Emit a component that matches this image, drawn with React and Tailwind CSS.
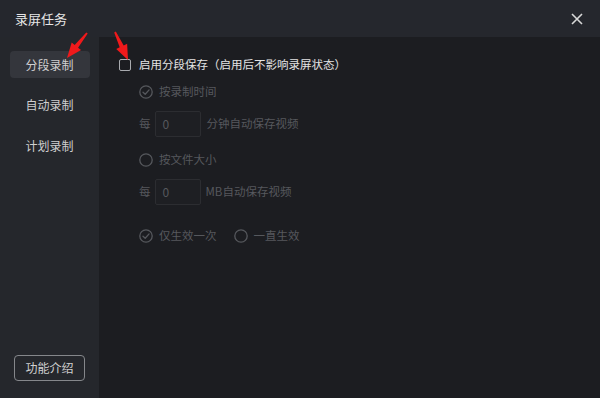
import React from "react";

const font = { fontFamily: '"Noto Sans CJK SC", "Noto Sans", sans-serif' };

function Radio({ checked }) {
  return (
    <svg width="14" height="14" viewBox="0 0 14 14" className="shrink-0">
      <circle cx="7" cy="7" r="6.2" fill="none" stroke="#56585d" strokeWidth="1.3" />
      {checked && (
        <path d="M4 7.2 L6.2 9.3 L10.1 4.9" fill="none" stroke="#56585d" strokeWidth="1.3" strokeLinecap="round" strokeLinejoin="round" />
      )}
    </svg>
  );
}

function Arrow({ x1, y1, x2, y2 }) {
  const dx = x2 - x1, dy = y2 - y1;
  const len = Math.hypot(dx, dy);
  const ux = dx / len, uy = dy / len;
  const px = -uy, py = ux;
  const hl = 15, hw = 6;
  const bx = x2 - ux * hl, by = y2 - uy * hl;
  const pts = `${x1 - px * 0.9},${y1 - py * 0.9} ${x1 + px * 0.9},${y1 + py * 0.9} ${bx + px * 2.2},${by + py * 2.2} ${bx + px * hw},${by + py * hw} ${x2},${y2} ${bx - px * hw},${by - py * hw} ${bx - px * 2.2},${by - py * 2.2}`;
  return <polygon points={pts} fill="#f0191b" />;
}

export default function App() {
  return (
    <div className="relative w-[600px] h-[398px] bg-[#1c1d21] flex flex-col overflow-hidden" style={font}>
      <div className="h-[37px] shrink-0 bg-[#25272d] flex items-center justify-between pl-[15px] pr-[17px]">
        <span className="text-[13px] text-[#e6e6e6]">录屏任务</span>
        <svg width="12" height="12" viewBox="0 0 12 12">
          <path d="M1 1 L11 11 M11 1 L1 11" stroke="#d8d8d8" strokeWidth="1.6" />
        </svg>
      </div>
      <div className="flex flex-1 min-h-0">
        <div className="w-[99px] shrink-0 bg-[#25272c] flex flex-col items-center pt-[14px] pb-[17px]">
          <div className="w-[80px] h-[27px] rounded-[4px] bg-[#34363c] flex items-center justify-center text-[12px] text-[#d0d0d0]">分段录制</div>
          <div className="h-[27px] mt-[13px] flex items-center text-[12px] text-[#cfcfcf]">自动录制</div>
          <div className="h-[27px] mt-[14px] flex items-center text-[12px] text-[#cfcfcf]">计划录制</div>
          <div className="flex-1" />
          <div className="w-[71px] h-[26px] rounded-[4px] border border-[#85878b] flex items-center justify-center text-[12px] text-[#d0d0d0]">功能介绍</div>
        </div>
        <div className="flex-1 pl-[20px] pt-[21px] text-[11.5px]">
          <div className="flex items-center h-[14px]">
            <div className="w-[12px] h-[12px] rounded-[2px] border border-[#a9abaf] shrink-0" />
            <span className="ml-[8px] text-[#e4e4e4]">启用分段保存（启用后不影响录屏状态）</span>
          </div>
          <div className="pl-[20px] text-[#56585d]">
            <div className="flex items-center gap-[6px] mt-[13px] h-[14px]">
              <Radio checked />
              <span>按录制时间</span>
            </div>
            <div className="flex items-center mt-[12px]">
              <span>每</span>
              <div className="ml-[4px] w-[46px] h-[26px] bg-[#1e1f23] border border-[#2c2d31] rounded-[2px] flex items-center pl-[7px] text-[12px]">0</div>
              <span className="ml-[6px]">分钟自动保存视频</span>
            </div>
            <div className="flex items-center gap-[6px] mt-[16px] h-[14px]">
              <Radio />
              <span>按文件大小</span>
            </div>
            <div className="flex items-center mt-[12px]">
              <span>每</span>
              <div className="ml-[4px] w-[46px] h-[26px] bg-[#1e1f23] border border-[#2c2d31] rounded-[2px] flex items-center pl-[7px] text-[12px]">0</div>
              <span className="ml-[5px]">MB自动保存视频</span>
            </div>
            <div className="flex items-center mt-[24px] h-[14px]">
              <Radio checked />
              <span className="ml-[6px]">仅生效一次</span>
              <span className="ml-[17px] flex items-center gap-[6px]">
                <Radio />
                <span>一直生效</span>
              </span>
            </div>
          </div>
        </div>
      </div>
      <svg className="absolute left-0 top-0 pointer-events-none" width="600" height="398">
        <Arrow x1={87} y1={33} x2={67} y2={58} />
        <Arrow x1={115} y1={32} x2={128} y2={60} />
      </svg>
    </div>
  );
}
